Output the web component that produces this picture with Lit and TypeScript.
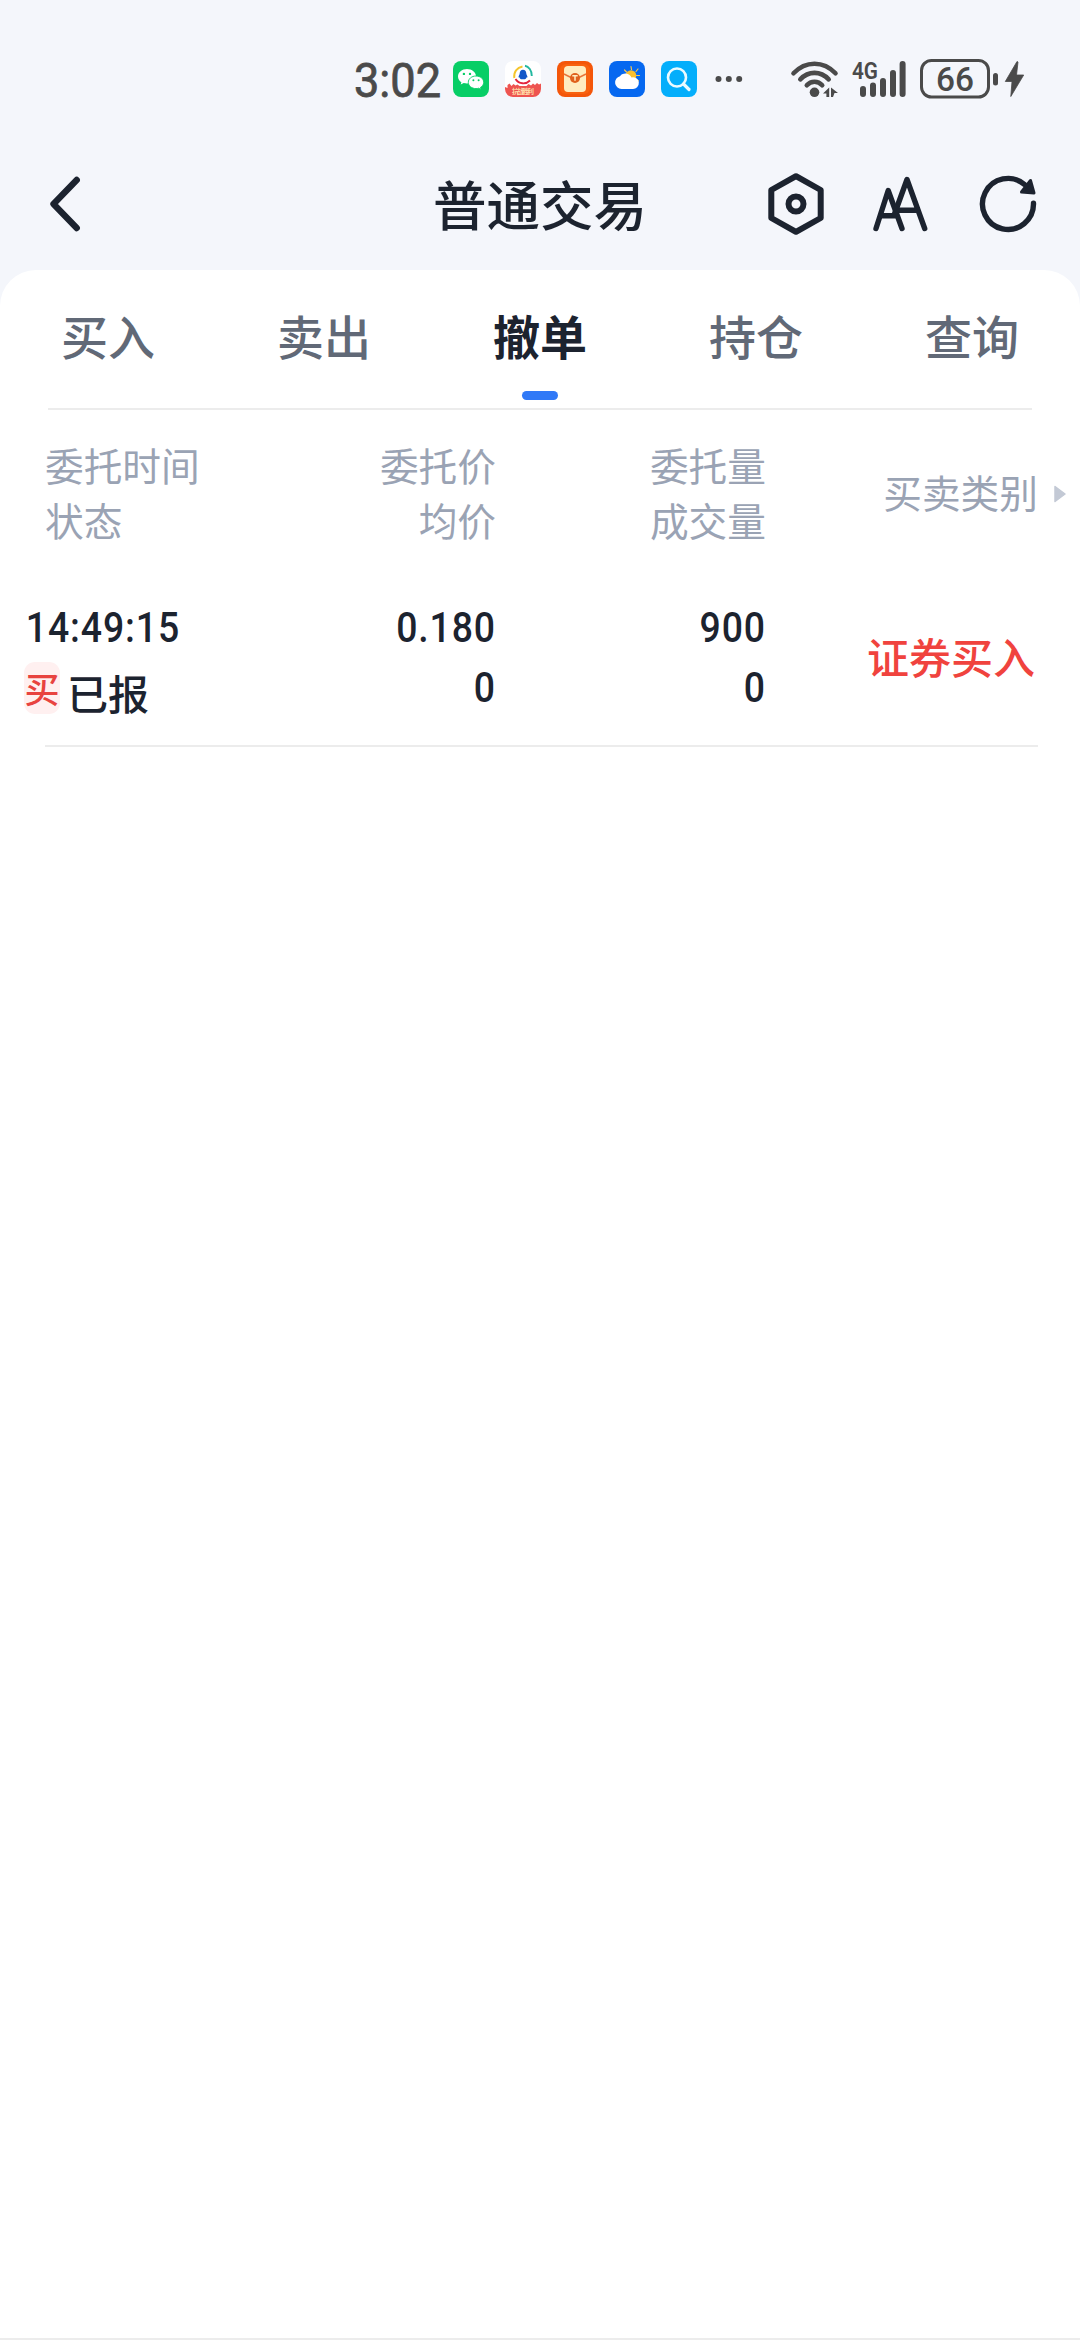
import { LitElement, html, css } from "lit";
import { customElement, state } from "lit/decorators.js";
import { classMap } from "lit/directives/class-map.js";

interface Order {
  time: string;
  side: string;
  status: string;
  price: string;
  avg: string;
  qty: string;
  filled: string;
  kind: string;
}

@customElement("status-bar")
class StatusBar extends LitElement {
  static styles = css`
    :host {
      display: flex;
      height: 102px;
      padding: 56px 56px 0 355px;
      box-sizing: border-box;
      align-items: flex-start;
      color: #4a4a4a;
    }
    svg {
      display: block;
      flex: none;
      overflow: visible;
    }
    text {
      font-family: Roboto, "Noto Sans", sans-serif;
      fill: #4a4a4a;
    }
    .clock {
      font-size: 47.5px;
      font-weight: 400;
      stroke: #4a4a4a;
      stroke-width: 0.8px;
    }
    .net {
      font-size: 23px;
      font-weight: 600;
    }
    .level {
      font-size: 33px;
      font-weight: 500;
    }
    .banner {
      font-size: 7px;
      font-family: "Noto Sans CJK SC", sans-serif;
      font-weight: 700;
      fill: #ffdca8;
    }
    .apps {
      display: flex;
      gap: 16px;
      margin: 5px 0 0 10px;
    }
    .more {
      margin: 20px 0 0 18px;
    }
    .wifi {
      margin: 4px 0 0 48px;
    }
    .signal {
      margin: 4px 0 0 13px;
    }
    .battery {
      margin: 3px 0 0 14px;
    }
    .bolt {
      margin: 5px 0 0 7px;
    }
  `;

  render() {
    return html`
      <svg width="88" height="46" viewBox="0 0 88 46">
        <text class="clock" x="-1" y="40.5" textLength="87" lengthAdjust="spacingAndGlyphs">3:02</text>
      </svg>
      <div class="apps">
        <svg width="36" height="36" viewBox="0 0 36 36">
          <rect width="36" height="36" rx="8" fill="#07ce66" />
          <path d="M14 8C9 8 5 11.300 5 15.400c0 2.400 1.300 4.500 3.400 5.800L7.700 23.500l3-1.500c1.100.3 2.200.4 3.300.4 5 0 9-3.100 9-7.100S19 8 14 8z" fill="#fff" />
          <path d="M23 15c-4.300 0-7.700 2.800-7.700 6.300s3.400 6.300 7.700 6.300c.9 0 1.800-.1 2.600-.4l2.500 1.300-.6-2.100c2-1.100 3.200-3 3.200-5.100C30.700 17.800 27.300 15 23 15z" fill="#fff" stroke="#07ce66" stroke-width=".9" />
          <g fill="#07ce66"><circle cx="10.900" cy="12.900" r="1.200" /><circle cx="17" cy="12.900" r="1.200" /><circle cx="20.400" cy="19.300" r="1" /><circle cx="25.600" cy="19.300" r="1" /></g>
        </svg>
        <svg width="36" height="36" viewBox="0 0 36 36">
          <rect width="36" height="36" rx="8" fill="#fff" />
          <g fill="none" stroke-width="1.900">
            <path d="M9.300 17C8.500 11 12 6.500 17.500 5.500" stroke="#f5c52c" />
            <path d="M20 4.800c3.500.6 7 4.400 6.800 10.200" stroke="#22b8a0" />
            <path d="M10.500 18c3.500 5.500 10.500 5.500 14.500 1.500" stroke="#e4253c" />
          </g>
          <path d="M18 8.800c-2 0-3.300 1.500-3.300 3.700 0 .9-.9 1.900-1.100 3-.2.900.2 1.300.8.700.2 1 .8 1.700 1.600 2.100h4c.8-.4 1.400-1.100 1.600-2.100.6.6 1 .2.800-.7-.2-1.100-1.100-2.100-1.100-3 0-2.200-1.300-3.700-3.300-3.700z" fill="#1256c8" />
          <path d="M0 26l2.500 1v-3l2-1.500 2 2.500 2-2 2 1.500 2-1 2 1.500h7l2-2 2.500 1.500 2-2 2 1.500 2-2 2 1.500 2-1V28a8 8 0 0 1-8 8H8a8 8 0 0 1-8-8z" fill="#ee5450" />
          <text class="banner" x="7" y="33" textLength="22">抗战胜利</text>
        </svg>
        <svg width="36" height="36" viewBox="0 0 36 36">
          <rect width="36" height="36" rx="8" fill="#f4560a" />
          <rect x="3" y="3" width="30" height="30" rx="6" fill="#fa6a14" opacity=".6" />
          <rect x="7" y="5" width="22" height="26" rx="4" fill="#ffecc0" />
          <path d="M7 13l8 4M29 13l-8 4" stroke="#e8743a" stroke-width="1.400" />
          <circle cx="18" cy="17" r="5" fill="#e0601c" />
          <path d="M15.300 14.800h5.400M18 14.800v5" stroke="#ffecc0" stroke-width="1.500" />
        </svg>
        <svg width="36" height="36" viewBox="0 0 36 36">
          <rect width="36" height="36" rx="8" fill="#0668f0" />
          <path d="M22 5.500l.5 3M29 8l-2 2.500M30.500 14.500h-3M29.500 20l-2-1.500M15.500 9l2 2" stroke="#f5c451" stroke-width="1.200" stroke-linecap="round" />
          <circle cx="22" cy="14.500" r="5.300" fill="#fbc02e" />
          <path d="M12.500 28A6.500 6.500 0 0 1 11 15.200a6.800 6.800 0 0 1 11.500 1.200A5.900 5.900 0 1 1 23.500 28z" fill="#fff" />
        </svg>
        <svg width="36" height="36" viewBox="0 0 36 36">
          <rect width="36" height="36" rx="8" fill="#04aefb" />
          <circle cx="16" cy="16.500" r="9" fill="none" stroke="#eafaff" stroke-width="2.600" />
          <path d="M22.500 23l5.500 5.500" stroke="#eafaff" stroke-width="3.200" stroke-linecap="round" />
        </svg>
      </div>
      <svg class="more" width="28" height="6" viewBox="0 0 28 6" fill="currentColor">
        <circle cx="3.500" cy="3" r="3" /><circle cx="13.800" cy="3" r="3" /><circle cx="24.200" cy="3" r="3" />
      </svg>
      <svg class="wifi" width="48" height="38" viewBox="0 0 48 38" fill="none" stroke="currentColor" stroke-width="4.600" stroke-linecap="round">
        <path d="M2.500 13.300C14.500 .5 32.500 .5 44.500 13.300" />
        <path d="M9.300 19.300C17.500 10.700 29.500 10.700 37.700 19.300" />
        <path d="M15.800 25.300C20 20.500 27 20.500 31.200 25.300" />
        <circle cx="23.500" cy="32.300" r="4.800" fill="currentColor" stroke="none" />
        <path d="M38.200 27.500v9.500h-2.800v-3.500H32zM40 37v-9.500l7 5.500h-3.500l-1.500 4z" fill="currentColor" stroke="none" />
      </svg>
      <svg class="signal" width="54" height="38" viewBox="0 0 54 38">
        <text class="net" x="0" y="19" textLength="26" lengthAdjust="spacingAndGlyphs">4G</text>
        <g stroke="currentColor" stroke-width="6" stroke-linecap="round">
          <path d="M11 29v5M21 25.500v8.500M31 21v13M41 13v21M50.600 4v30" />
        </g>
      </svg>
      <svg class="battery" width="78" height="40" viewBox="0 0 78 40">
        <rect x="1.500" y="1.500" width="67" height="36.500" rx="10" fill="none" stroke="currentColor" stroke-width="3" />
        <rect x="73" y="14" width="5" height="12.500" rx="2.500" fill="currentColor" />
        <text class="level" x="16" y="32" textLength="38" lengthAdjust="spacingAndGlyphs">66</text>
      </svg>
      <svg class="bolt" width="19" height="36" viewBox="0 0 19 36" fill="currentColor">
        <path d="M12 0.500L0.300 20.500H7L5.800 35.500L18.700 14H11.500L13 1z" stroke="currentColor" stroke-width=".8" stroke-linejoin="round" />
      </svg>
    `;
  }
}

@customElement("title-bar")
class TitleBar extends LitElement {
  static styles = css`
    :host {
      display: grid;
      grid-template-columns: 1fr auto 1fr;
      align-items: center;
      height: 168px;
      padding: 36px 40px 0 45px;
      box-sizing: border-box;
      color: #1c232f;
    }
    svg {
      display: block;
      overflow: visible;
      fill: none;
      stroke: currentColor;
      stroke-linecap: round;
      stroke-linejoin: round;
    }
    .title {
      margin: 0;
      font-size: 53.5px;
      line-height: 64px;
      font-weight: 500;
      padding: 0 5px 2px 0;
    }
    .actions {
      display: flex;
      justify-content: flex-end;
      gap: 47px;
    }
  `;

  render() {
    return html`
      <svg width="40" height="64" viewBox="45 172 40 64" stroke-width="6.400"><path d="M76.700 180L53.500 204L76.700 228" /></svg>
      <h1 class="title">普通交易</h1>
      <div class="actions">
        <svg width="61" height="64" viewBox="764 172 61 64" stroke-width="6">
          <path d="M796 176.200L820.700 190V218L796 231.800L771.300 218V190Z" />
          <circle cx="796" cy="204" r="7.500" />
        </svg>
        <svg width="59" height="64" viewBox="872 172 59 64" stroke-width="5.400">
          <path d="M876 228.500L888.200 190.500L902 228.500M881 215.700H896" />
          <path d="M894.500 214L907 179.500L924.700 228.500M896.500 210.300H918" />
        </svg>
        <svg width="62" height="64" viewBox="978 172 62 64" stroke-width="5.400">
          <path d="M1033.500 203.300A25.500 25.500 0 1 1 1024.500 184.500" />
          <path d="M1030.500 180.500L1034 193L1021.500 192Z" fill="currentColor" stroke-width="3" />
        </svg>
      </div>
    `;
  }
}

@customElement("order-table")
class OrderTable extends LitElement {
  static styles = css`
    :host {
      display: block;
    }
    .grid {
      display: grid;
      grid-template-columns: 316px 180px 270px 1fr;
    }
    .head {
      height: 160px;
      padding-top: 27px;
      box-sizing: border-box;
      font-size: 38.7px;
      line-height: 54.5px;
      color: #9aa3b4;
    }
    .num,
    .type {
      text-align: right;
    }
    .first {
      padding-left: 45px;
    }
    .head .type {
      display: flex;
      align-items: center;
      justify-content: flex-end;
      gap: 16px;
      height: 108px;
      padding-right: 14px;
    }
    .tri {
      display: block;
      margin-top: 5px;
    }
    .row {
      height: 175px;
      padding-top: 28px;
      box-sizing: border-box;
      font-size: 41px;
      line-height: 60px;
      color: #1c232f;
      font-weight: 500;
    }
    .row .lead {
      padding-left: 24px;
    }
    .fig {
      display: block;
      font-family: Roboto, sans-serif;
      font-size: 42px;
      letter-spacing: 1px;
      transform: scaleX(0.89);
      transform-origin: right center;
      padding-right: 0;
    }
    .lead .fig {
      transform-origin: left center;
      padding: 0 0 0 2px;
    }
    .state {
      display: flex;
      gap: 7px;
      padding-top: 4px;
    }
    .badge {
      width: 36px;
      height: 52px;
      line-height: 52px;
      border-radius: 11px;
      background: #fff0f0;
      color: #e8433f;
      font-size: 35px;
      text-align: center;
    }
    .row .type {
      font-size: 42px;
      line-height: 115px;
      color: #f0433e;
      padding-right: 45px;
    }
    .rule {
      height: 2px;
      margin: 0 42px 0 45px;
      background: #ececec;
    }
  `;

  private orders: Order[] = [
    { time: "14:49:15", side: "买", status: "已报", price: "0.180", avg: "0", qty: "900", filled: "0", kind: "证券买入" },
  ];

  render() {
    return html`
      <div class="grid head">
        <div class="first">委托时间<br />状态</div>
        <div class="num">委托价<br />均价</div>
        <div class="num">委托量<br />成交量</div>
        <div class="type">
          <span>买卖类别</span>
          <svg class="tri" width="12" height="18" viewBox="0 0 12 18"><path d="M1 1.500L11 9L1 16.500Z" fill="#c3c9d5" stroke="#c3c9d5" stroke-width="1.500" stroke-linejoin="round" /></svg>
        </div>
      </div>
      ${this.orders.map(
        (o) => html`
          <div class="grid row">
            <div class="lead">
              <span class="fig">${o.time}</span>
              <div class="state"><span class="badge">${o.side}</span><span>${o.status}</span></div>
            </div>
            <div class="num"><span class="fig">${o.price}</span><span class="fig">${o.avg}</span></div>
            <div class="num"><span class="fig">${o.qty}</span><span class="fig">${o.filled}</span></div>
            <div class="type">${o.kind}</div>
          </div>
          <div class="rule"></div>
        `
      )}
    `;
  }
}

@customElement("app-root")
class AppRoot extends LitElement {
  static styles = css`
    :host {
      display: flex;
      flex-direction: column;
      width: 1080px;
      height: 2340px;
      background: #f4f6fb;
      font-family: "Noto Sans CJK SC", sans-serif;
    }
    .panel {
      flex: 1;
      background: #fff;
      border-radius: 36px 36px 0 0;
      border-bottom: 2px solid #ececec;
    }
    .tabs {
      display: grid;
      grid-template-columns: repeat(5, 1fr);
      height: 138px;
    }
    .tab {
      display: flex;
      flex-direction: column;
      align-items: center;
      padding-top: 35px;
      font-size: 47px;
      line-height: 60px;
      color: #616977;
      font-weight: 500;
      cursor: pointer;
    }
    .tab.on {
      color: #1c232f;
      font-weight: 700;
    }
    .tab.on::after {
      content: "";
      width: 36px;
      height: 9px;
      margin-top: 26px;
      border-radius: 4.5px;
      background: #3079f7;
    }
    .line {
      height: 2px;
      margin: 0 48px;
      background: #ececec;
    }
  `;

  @state() private active = 2;

  private tabs = ["买入", "卖出", "撤单", "持仓", "查询"];

  render() {
    return html`
      <status-bar></status-bar>
      <title-bar></title-bar>
      <main class="panel">
        <nav class="tabs">
          ${this.tabs.map(
            (t, i) => html`<div class=${classMap({ tab: true, on: i === this.active })} @click=${() => (this.active = i)}>${t}</div>`
          )}
        </nav>
        <div class="line"></div>
        <order-table></order-table>
      </main>
    `;
  }
}
